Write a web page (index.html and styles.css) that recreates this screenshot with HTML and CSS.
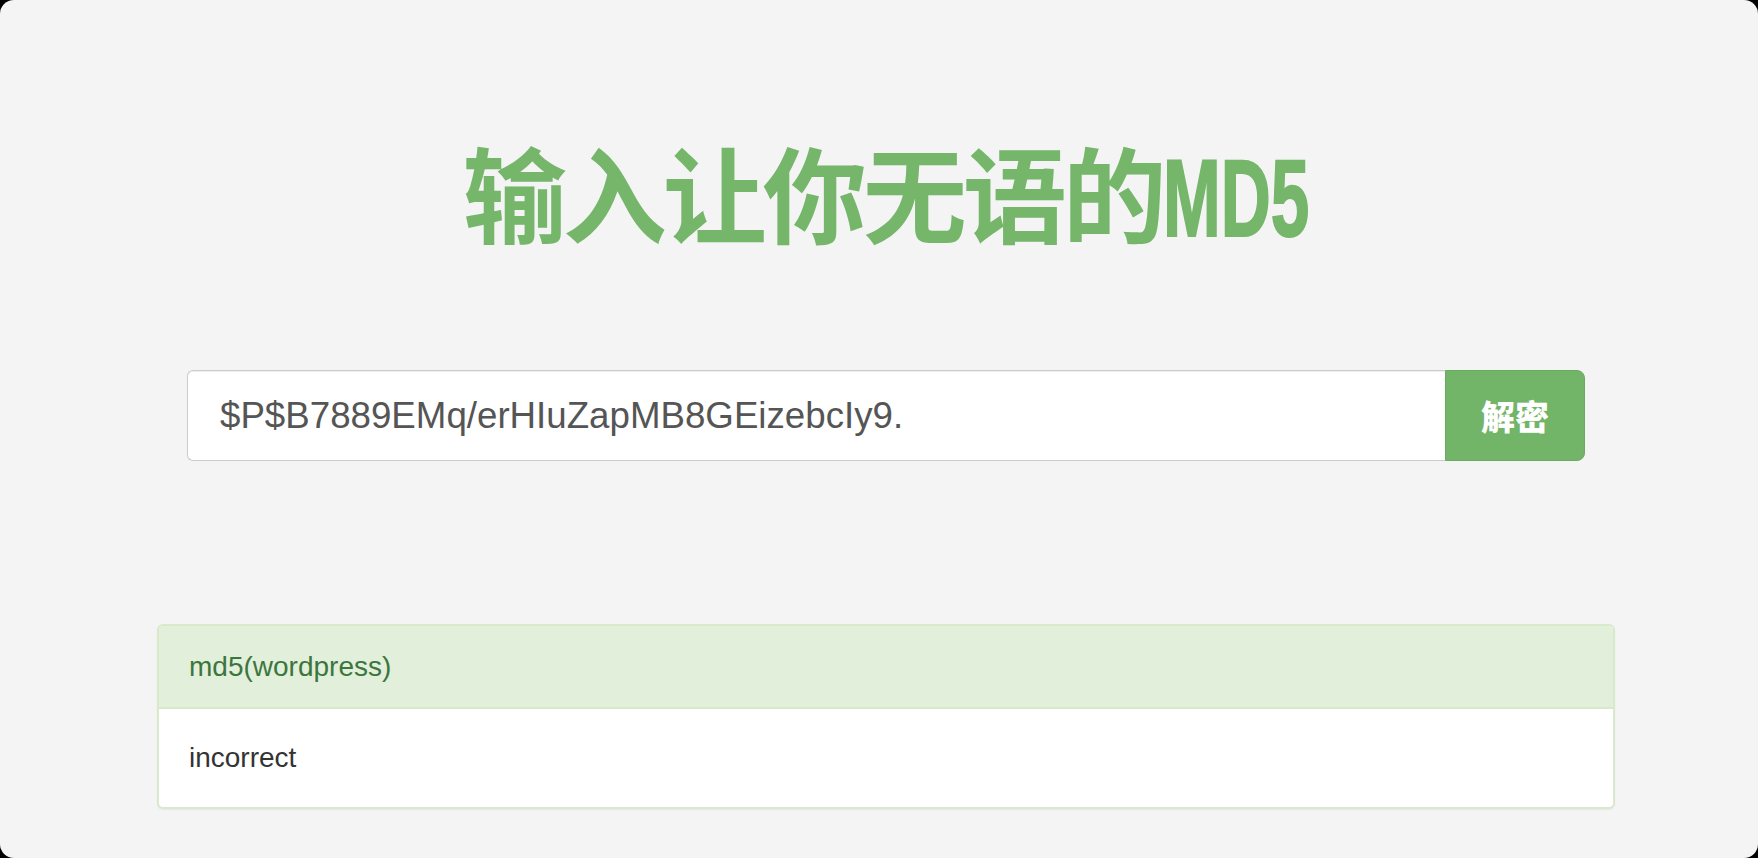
FILE: index.html
```html
<!DOCTYPE html>
<html lang="zh-CN">
<head>
    <meta charset="UTF-8">
    <meta name="viewport" content="width=device-width, initial-scale=1.0">
    <title>输入让你无语的MD5</title>
    <link rel="stylesheet" href="styles.css">
</head>
<body>
    <div class="window">
        <div class="container">
            <h1 class="title">输入让你无语的<span class="title-latin">MD5</span></h1>

            <form class="search-form" onsubmit="return false;">
                <div class="input-group">
                    <input type="text" class="hash-input" value="$P$B7889EMq/erHIuZapMB8GEizebcIy9.">
                    <button type="submit" class="decode-btn">解密</button>
                </div>
            </form>

            <!-- 结果面板 -->
            <div class="panel">
                <div class="panel-heading">md5(wordpress)</div>
                <div class="panel-body">incorrect</div>
            </div>
        </div>
    </div>
</body>
</html>
```

FILE: styles.css
```css
html, body {
    margin: 0;
    padding: 0;
    height: 100%;
}

body {
    background-color: #000;
    font-family: "Liberation Sans", Arial, "Noto Sans CJK SC", sans-serif;
    color: #333;
}

.window {
    box-sizing: border-box;
    height: 100vh;
    background-color: #f4f4f4;
    border-radius: 14px;
    overflow: hidden;
    padding-left: 14px;
}

.container {
    width: 1458px;
    margin: 0 auto;
    padding-top: 121px;
}

.title {
    margin: 0;
    text-align: center;
    font-family: "Noto Sans CJK SC", sans-serif;
    font-weight: 700;
    font-size: 104px;
    letter-spacing: -4px;
    line-height: 140px;
    color: #75b66b;
}

/* 英文部分压窄，接近原图的粗窄字体 */
.title-latin {
    display: inline-block;
    font-family: "Liberation Sans", Arial, sans-serif;
    font-weight: bold;
    font-size: 110px;
    letter-spacing: 0;
    -webkit-text-stroke: 2px #75b66b;
    transform: scaleX(0.63);
    transform-origin: left center;
    margin-right: -86px;
}

.search-form {
    margin: 102px 30px 0;
}

.input-group {
    display: flex;
    height: 91px;
}

.hash-input {
    flex: 1;
    box-sizing: border-box;
    height: 100%;
    margin: 0;
    padding: 0 32px;
    border: 1px solid #ccc;
    border-right: none;
    border-radius: 6px 0 0 6px;
    background-color: #fff;
    box-shadow: inset 0 1px 1px rgba(0, 0, 0, 0.075);
    font-family: "Liberation Sans", Arial, sans-serif;
    font-size: 36.7px;
    color: #555;
    outline: none;
}

.decode-btn {
    width: 140px;
    height: 100%;
    margin: 0;
    border: 1px solid #6aab60;
    border-radius: 0 8px 8px 0;
    background-color: #72b468;
    color: #fff;
    font-family: "Noto Sans CJK SC", sans-serif;
    font-weight: 900;
    font-size: 34px;
    cursor: pointer;
}

.panel {
    margin-top: 163px;
    background-color: #fff;
    border: 2px solid #d9e9cc;
    border-radius: 6px;
    box-shadow: 0 1px 2px rgba(0, 0, 0, 0.05);
    overflow: hidden;
}

.panel-heading {
    height: 83px;
    box-sizing: border-box;
    padding: 0 30px;
    display: flex;
    align-items: center;
    background-color: #e2efdb;
    border-bottom: 2px solid #d7e9c8;
    color: #3c763d;
    font-size: 28px;
}

.panel-body {
    height: 98px;
    box-sizing: border-box;
    padding: 0 30px;
    display: flex;
    align-items: center;
    font-size: 28px;
    color: #333;
}
```
